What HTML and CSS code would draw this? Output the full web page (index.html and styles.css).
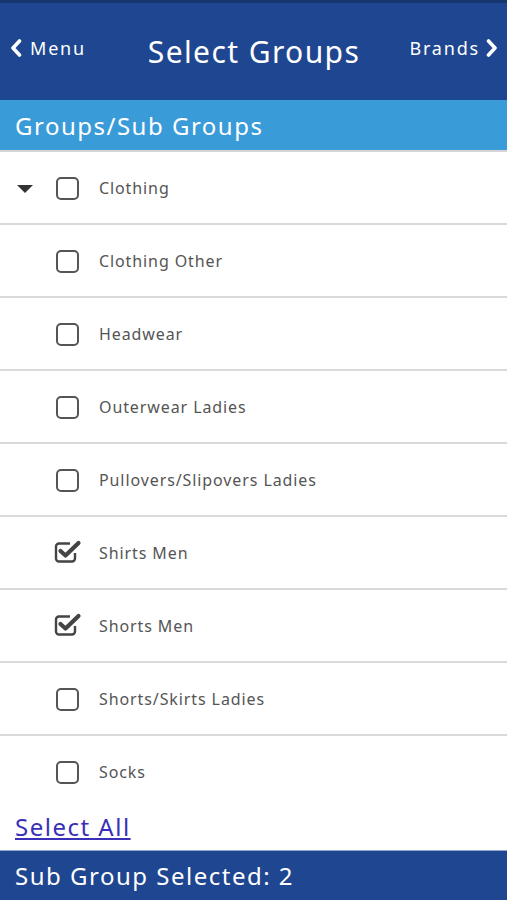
FILE: index.html
```html
<!DOCTYPE html>
<html>
<head>
<meta charset="utf-8">
<link rel="stylesheet" href="styles.css">
</head>
<body>
<div class="app">
  <header class="topbar">
    <div class="nav nav-left">
      <svg class="chev" viewBox="0 0 12 18" width="12" height="18"><path d="M9.5 2 L3 9 L9.5 16" fill="none" stroke="#fff" stroke-width="3.6" stroke-linecap="round" stroke-linejoin="round"/></svg>
      <span>Menu</span>
    </div>
    <h1 class="title">Select Groups</h1>
    <div class="nav nav-right">
      <span>Brands</span>
      <svg class="chev" viewBox="0 0 12 18" width="12" height="18"><path d="M2.5 2 L9 9 L2.5 16" fill="none" stroke="#fff" stroke-width="3.6" stroke-linecap="round" stroke-linejoin="round"/></svg>
    </div>
  </header>
  <div class="section">Groups/Sub Groups</div>
  <ul class="list">
    <li class="row">
      <span class="caret"><svg viewBox="0 0 16 8" width="16" height="8"><path d="M0 0 H16 L8 8 Z" fill="#333"/></svg></span>
      <span class="box"></span><span class="label">Clothing</span>
    </li>
    <li class="row"><span class="caret"></span><span class="box"></span><span class="label">Clothing Other</span></li>
    <li class="row"><span class="caret"></span><span class="box"></span><span class="label">Headwear</span></li>
    <li class="row"><span class="caret"></span><span class="box"></span><span class="label">Outerwear Ladies</span></li>
    <li class="row"><span class="caret"></span><span class="box"></span><span class="label">Pullovers/Slipovers Ladies</span></li>
    <li class="row"><span class="caret"></span>
      <svg class="checked" viewBox="0 0 28 26" width="28" height="26"><path d="M21 15 V20.5 A3 3 0 0 1 18 23.5 H5 A3 3 0 0 1 2 20.5 V8.5 A3 3 0 0 1 5 5.5 H16" fill="none" stroke="#444" stroke-width="2.4"/><path d="M6.5 13 L11.5 17.5 L24.5 5" fill="none" stroke="#444" stroke-width="4.2" stroke-linecap="round" stroke-linejoin="round"/></svg>
      <span class="label">Shirts Men</span></li>
    <li class="row"><span class="caret"></span>
      <svg class="checked" viewBox="0 0 28 26" width="28" height="26"><path d="M21 15 V20.5 A3 3 0 0 1 18 23.5 H5 A3 3 0 0 1 2 20.5 V8.5 A3 3 0 0 1 5 5.5 H16" fill="none" stroke="#444" stroke-width="2.4"/><path d="M6.5 13 L11.5 17.5 L24.5 5" fill="none" stroke="#444" stroke-width="4.2" stroke-linecap="round" stroke-linejoin="round"/></svg>
      <span class="label">Shorts Men</span></li>
    <li class="row"><span class="caret"></span><span class="box"></span><span class="label">Shorts/Skirts Ladies</span></li>
    <li class="row row-last"><span class="caret"></span><span class="box"></span><span class="label">Socks</span></li>
  </ul>
  <a class="select-all" href="#">Select All</a>
  <footer class="footer">Sub Group Selected: 2</footer>
</div>
</body>
</html>
```
FILE: styles.css
```css
* { box-sizing: border-box; }
html, body { margin: 0; padding: 0; }
body {
  width: 507px;
  height: 900px;
  overflow: hidden;
  font-family: "Noto Sans", "DejaVu Sans", sans-serif;
  background: #fff;
}
.app {
  display: flex;
  flex-direction: column;
  height: 900px;
}
.topbar {
  height: 100px;
  background: #1f4690;
  border-top: 3px solid #163670;
  display: flex;
  align-items: center;
  justify-content: space-between;
  padding: 0 9px 4px 10px;
  color: #fff;
}
.nav {
  display: flex;
  align-items: center;
  gap: 8px;
  font-size: 18px;
  letter-spacing: 1.8px;
  width: 100px;
  margin-top: -3px;
}
.nav-right { justify-content: flex-end; gap: 6px; }
.title {
  margin: 4px 0 0;
  font-weight: normal;
  font-size: 30px;
  letter-spacing: 1.4px;
}
.section {
  height: 52px;
  background: #3a9bd9;
  color: #fff;
  font-size: 24px;
  letter-spacing: 1.5px;
  padding: 0 15px;
  display: flex;
  align-items: center;
  border-bottom: 2px solid #d6d6d6;
}
.list {
  list-style: none;
  margin: 0;
  padding: 0;
}
.row {
  height: 73px;
  display: flex;
  align-items: center;
  border-bottom: 2px solid #d9d9d9;
  padding-top: 1px;
}
.row-last {
  height: 72px;
  border-bottom: none;
  padding-bottom: 1px;
}
.caret {
  width: 56px;
  padding-left: 17px;
  display: flex;
  align-items: center;
  margin-top: 1px;
}
.box {
  width: 23px;
  height: 23px;
  border: 2px solid #555;
  border-radius: 5px;
  margin-right: 20px;
}
.checked {
  margin-left: -2px;
  margin-right: 17px;
  margin-top: -4px;
}
.label {
  font-size: 16px;
  color: #555;
  letter-spacing: 0.9px;
}
.select-all {
  font-size: 24px;
  color: #3a2fb8;
  letter-spacing: 1.5px;
  text-decoration: underline;
  margin: 2px 0 0 15px;
  height: 40px;
  align-self: flex-start;
}
.footer {
  height: 50px;
  background: #1f4690;
  color: #fff;
  font-size: 24px;
  letter-spacing: 1.5px;
  padding: 0 15px;
  display: flex;
  align-items: center;
  border-top: 1px solid #8fa9d2;
}
```
